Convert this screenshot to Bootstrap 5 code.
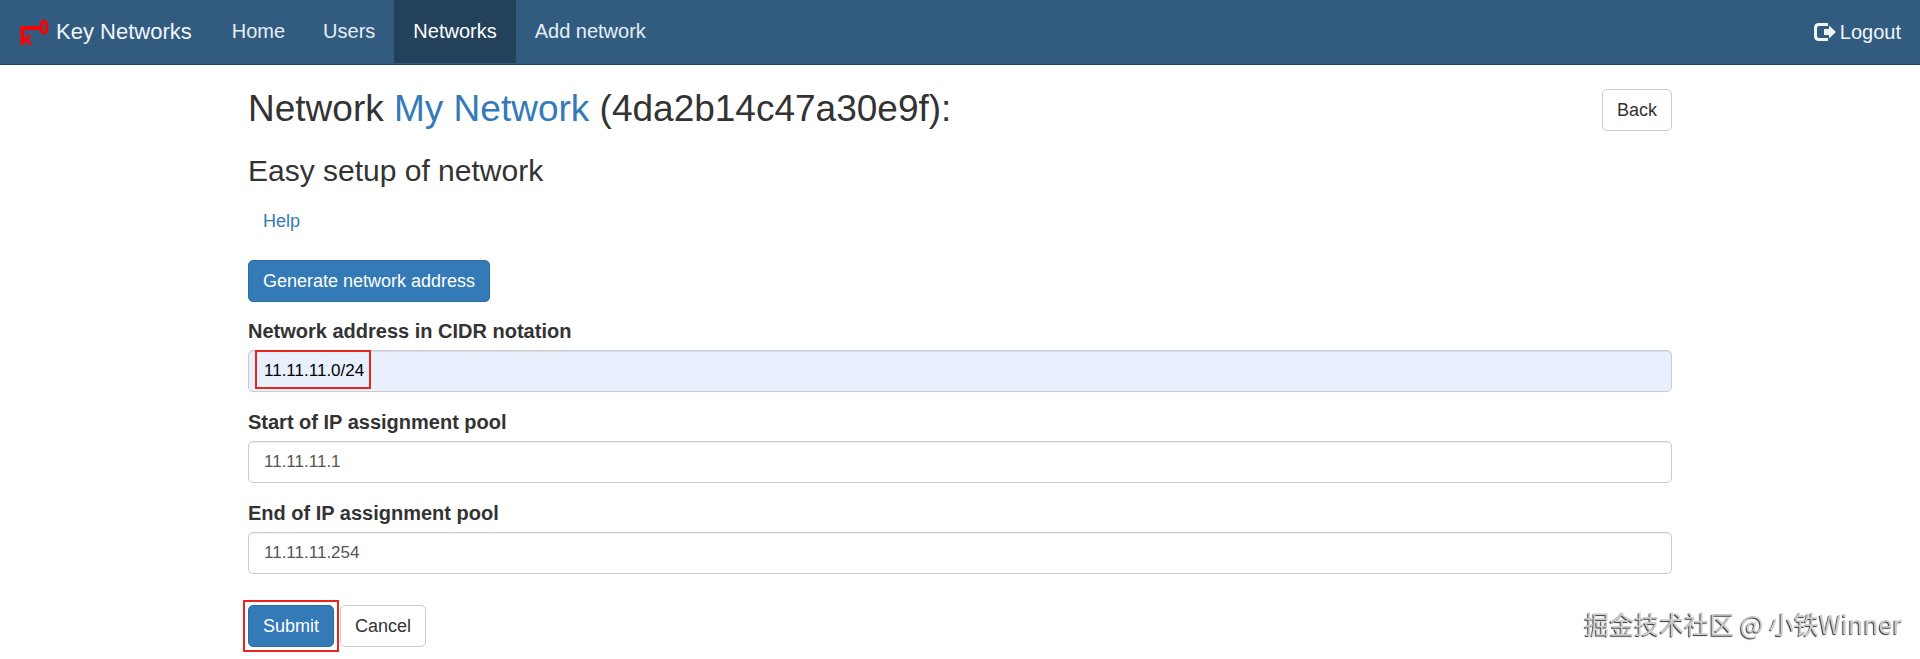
<!DOCTYPE html>
<html lang="en">
<head>
<meta charset="utf-8">
<meta name="viewport" content="width=device-width, initial-scale=1">
<title>Key Networks</title>
<link href="https://cdn.jsdelivr.net/npm/bootstrap@5.3.0/dist/css/bootstrap.min.css" rel="stylesheet">
<style>
body { font-family: "Liberation Sans", Arial, sans-serif; font-size: 20px; line-height: 28px; color: #333; }
a { color: #337ab7; text-decoration: none; }
.topbar { background: #315c80; border-bottom: 1px solid #23425c; padding: 0 19px 1px; --bs-navbar-nav-link-padding-x: 19px; }
.topbar .navbar-brand { font-size: 22px; line-height: 24px; color: #f1f5f8; gap: 7px; padding: 0; margin-right: 21px; }
.topbar .nav-link { color: #e6eef5; line-height: 25px; padding: 19px; }
.topbar .nav-link.active { color: #fff; background: #23415b; }
.logout { color: #f1f5f8; }
.page { max-width: 1464px; padding: 0 20px; }
h1 { font-size: 37px; line-height: 40px; font-weight: 400; }
h2 { font-size: 30px; line-height: 34px; font-weight: 400; margin: 23px 0 12px; }
.btn { font-size: 18px; line-height: 24px; padding: 8px 14px; border-radius: 5px; }
.btn-primary { --bs-btn-bg: #337ab7; --bs-btn-border-color: #2e6da4; }
.btn-plain { background: #fff; border-color: #ccc; color: #333; }
.btn-help { color: #337ab7; }
.generate { margin: 18px 0 17px; }
.form-label { font-weight: 700; line-height: 25px; margin-bottom: 6px; }
.form-control { font-size: 17px; line-height: 24px; padding: 8px 15px; border-color: #ccc; border-radius: 5px; color: #555; box-shadow: inset 0 1px 1px rgba(0,0,0,.08); }
.form-control.autofilled { background: #e8f0fe; color: #000; }
.field { margin-bottom: 18px; }
.actions { gap: 6px; padding: 13px 0 16px; }
.callout-box { position: absolute; border: 2px solid #e8241b; pointer-events: none; }
.around-value { left: 7px; top: 0; width: 116px; height: 39px; }
.around-button { inset: -5px; }
.watermark { position: fixed; right: 18px; bottom: 18px; font-family: "Noto Sans CJK SC", sans-serif; font-size: 25px; line-height: 36px; color: #ccc; text-shadow: -1px 1px 1px #333; white-space: nowrap; }
</style>
</head>
<body class="min-vh-100">
<nav class="navbar navbar-expand topbar">
  <a class="navbar-brand d-flex align-items-center" href="#">
    <svg width="30" height="26" viewBox="0 0 30 26" fill="none" stroke="#f00" aria-hidden="true">
      <path d="M3.500 26V9H21" stroke-width="4"/>
      <ellipse cx="25" cy="8" rx="3" ry="6" stroke-width="3"/>
      <path d="M4 21H7L11 16M7 20L12 26" stroke-width="3"/>
    </svg>
    Key Networks
  </a>
  <ul class="navbar-nav me-auto">
    <li class="nav-item"><a class="nav-link" href="#">Home</a></li>
    <li class="nav-item"><a class="nav-link" href="#">Users</a></li>
    <li class="nav-item"><a class="nav-link active" aria-current="page" href="#">Networks</a></li>
    <li class="nav-item"><a class="nav-link" href="#">Add network</a></li>
  </ul>
  <a class="logout d-flex align-items-center gap-1" href="#">
    <svg width="22" height="18" viewBox="0 0 22 18" aria-hidden="true">
      <path d="M14 1.500H5Q1.500 1.500 1.500 5V13Q1.500 16.500 5 16.500H14" fill="none" stroke="currentColor" stroke-width="3"/>
      <path d="M10 6H15V2.500L22 9L15 15.500V12H10Z" fill="currentColor"/>
    </svg>
    Logout
  </a>
</nav>
<main class="container-fluid page">
  <div class="d-flex justify-content-between align-items-start pt-4">
    <h1 class="m-0">Network <a href="#">My Network</a> (4da2b14c47a30e9f):</h1>
    <a class="btn btn-plain" href="#">Back</a>
  </div>
  <h2>Easy setup of network</h2>
  <a class="btn btn-help" href="#">Help</a>
  <form>
    <button type="button" class="btn btn-primary generate">Generate network address</button>
    <div class="field">
      <label class="form-label d-block" for="cidr">Network address in CIDR notation</label>
      <div class="position-relative">
        <input class="form-control autofilled" id="cidr" type="text" value="11.11.11.0/24">
        <span class="callout-box around-value"></span>
      </div>
    </div>
    <div class="field">
      <label class="form-label d-block" for="start">Start of IP assignment pool</label>
      <input class="form-control" id="start" type="text" value="11.11.11.1">
    </div>
    <div class="field">
      <label class="form-label d-block" for="end">End of IP assignment pool</label>
      <input class="form-control" id="end" type="text" value="11.11.11.254">
    </div>
    <div class="d-flex actions">
      <div class="position-relative">
        <button type="submit" class="btn btn-primary d-block">Submit</button>
        <span class="callout-box around-button"></span>
      </div>
      <a class="btn btn-plain" href="#">Cancel</a>
    </div>
  </form>
</main>
<div class="watermark">掘金技术社区 @ 小铁Winner</div>
<script src="https://cdn.jsdelivr.net/npm/bootstrap@5.3.0/dist/js/bootstrap.bundle.min.js"></script>
</body>
</html>
